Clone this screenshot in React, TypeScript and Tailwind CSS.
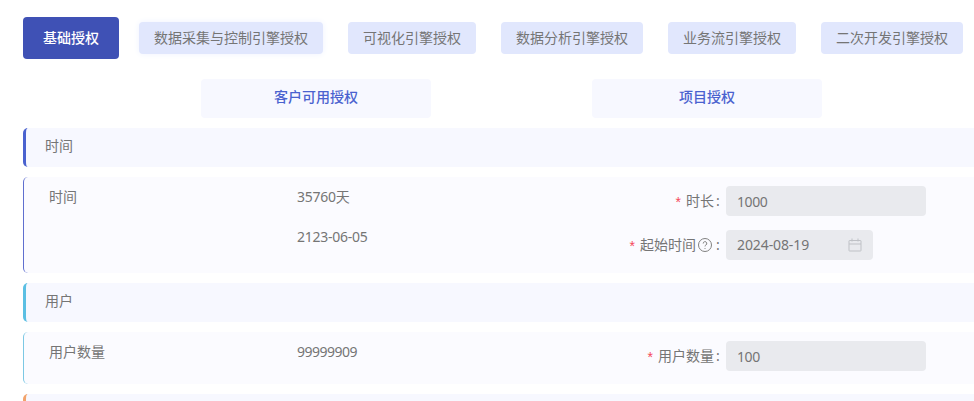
import React from "react";

const tabs = [
  { t: "数据采集与控制引擎授权", shadow: true },
  { t: "可视化引擎授权" },
  { t: "数据分析引擎授权" },
  { t: "业务流引擎授权" },
  { t: "二次开发引擎授权" },
];

function Calendar() {
  return (
    <svg width="14" height="14" viewBox="0 0 14 14" fill="none" stroke="#bfc1c6" strokeWidth="1">
      <rect x="1" y="2.5" width="12" height="10.5" rx="0.5" />
      <path d="M1 6h12M4 0.5v3M10 0.5v3" />
    </svg>
  );
}

function Help() {
  return (
    <svg width="14" height="14" viewBox="0 0 14 14" fill="none" stroke="#808080" strokeWidth="1" className="ml-[2px]">
      <circle cx="7" cy="7" r="6.5" />
      <path d="M5.2 5.5a1.8 1.8 0 1 1 2.7 1.5c-.6.4-.9.7-.9 1.4" />
      <path d="M7 10v.9" />
    </svg>
  );
}

function Header({ title, color }: { title: string; color: string }) {
  return (
    <div className={`h-[39px] flex items-center pl-[19px] pb-[3px] bg-[#f7f8ff] rounded-l-[5px] border-l-[3px] ${color}`}>
      {title}
    </div>
  );
}

function Label({ children, help }: { children: React.ReactNode; help?: boolean }) {
  return (
    <div className="w-[200px] flex justify-end items-center mr-[6px]">
      <span className="text-[#f5475b] mr-[5px] text-[14px] font-['Liberation_Sans'] leading-none pt-[2px]">*</span>
      <span>{children}</span>
      {help && <Help />}
      <span className={help ? "w-[4px] ml-[4px]" : "w-[4px] ml-[2px]"}>:</span>
    </div>
  );
}

export default function App() {
  return (
    <div className="w-[974px] h-[401px] overflow-hidden bg-white text-[14px] leading-[20px] text-[#757575] font-['Noto_Sans','Noto_Sans_CJK_SC',sans-serif] pl-[23px]">
      <div className="flex items-center h-[42px] mt-[17px]">
        <div className="w-[96px] h-[42px] mr-[20px] flex items-center justify-center rounded-[4px] bg-[#3f51b5] text-white font-medium">
          基础授权
        </div>
        <div className="flex gap-[25px]">
          {tabs.map((x) => (
            <div
              key={x.t}
              className={`h-[32px] px-[15px] flex items-center justify-center rounded-[4px] bg-[#e1e7fd] ${x.shadow ? "shadow-[0_0_6px_#eef2fe]" : ""}`}
            >
              {x.t}
            </div>
          ))}
        </div>
      </div>

      <div className="flex mt-[20px] ml-[178px] gap-[161px]">
        {["客户可用授权", "项目授权"].map((t) => (
          <div
            key={t}
            className="w-[230px] h-[39px] pb-[3px] flex items-center justify-center rounded-[4px] bg-[#f7f8ff] text-[#4a62cf] font-medium"
          >
            {t}
          </div>
        ))}
      </div>

      <div className="mt-[10px] flex flex-col gap-[10px]">
        <Header title="时间" color="border-[#4a62cf]" />
        <div className="h-[96px] flex bg-[#fbfbff] rounded-l-[5px] border-l border-[#5f6fcf] pt-[9px]">
          <div className="w-[273px] pl-[25px] pt-[1px]">时间</div>
          <div className="w-[223px] pt-[1px] tracking-[-0.25px]">
            <div>35760天</div>
            <div className="mt-[20px]">2123-06-05</div>
          </div>
          <div className="flex flex-col gap-[14px]">
            <div className="flex h-[30px]">
              <Label>时长</Label>
              <div className="w-[200px] h-[30px] pl-[11px] pt-[1px] flex items-center rounded-[4px] bg-[#e9eaee] tracking-[-0.4px]">1000</div>
            </div>
            <div className="flex h-[30px]">
              <Label help>起始时间</Label>
              <div className="w-[147px] h-[30px] px-[11px] flex items-center justify-between rounded-[4px] bg-[#e9eaee]">
                <span className="tracking-[-0.1px]">2024-08-19</span>
                <Calendar />
              </div>
            </div>
          </div>
        </div>

        <Header title="用户" color="border-[#5bbfe3]" />
        <div className="h-[52px] flex bg-[#fbfbff] rounded-l-[5px] border-l border-[#7cc8e4] pt-[9px]">
          <div className="w-[273px] pl-[25px] pt-[1px]">用户数量</div>
          <div className="w-[223px] pt-[1px] tracking-[-0.5px]">99999909</div>
          <div className="flex h-[30px]">
            <Label>用户数量</Label>
            <div className="w-[200px] h-[30px] pl-[11px] pt-[1px] flex items-center rounded-[4px] bg-[#e9eaee] tracking-[-0.4px]">100</div>
          </div>
        </div>

        <Header title="" color="border-[#f2a36b]" />
      </div>
    </div>
  );
}
